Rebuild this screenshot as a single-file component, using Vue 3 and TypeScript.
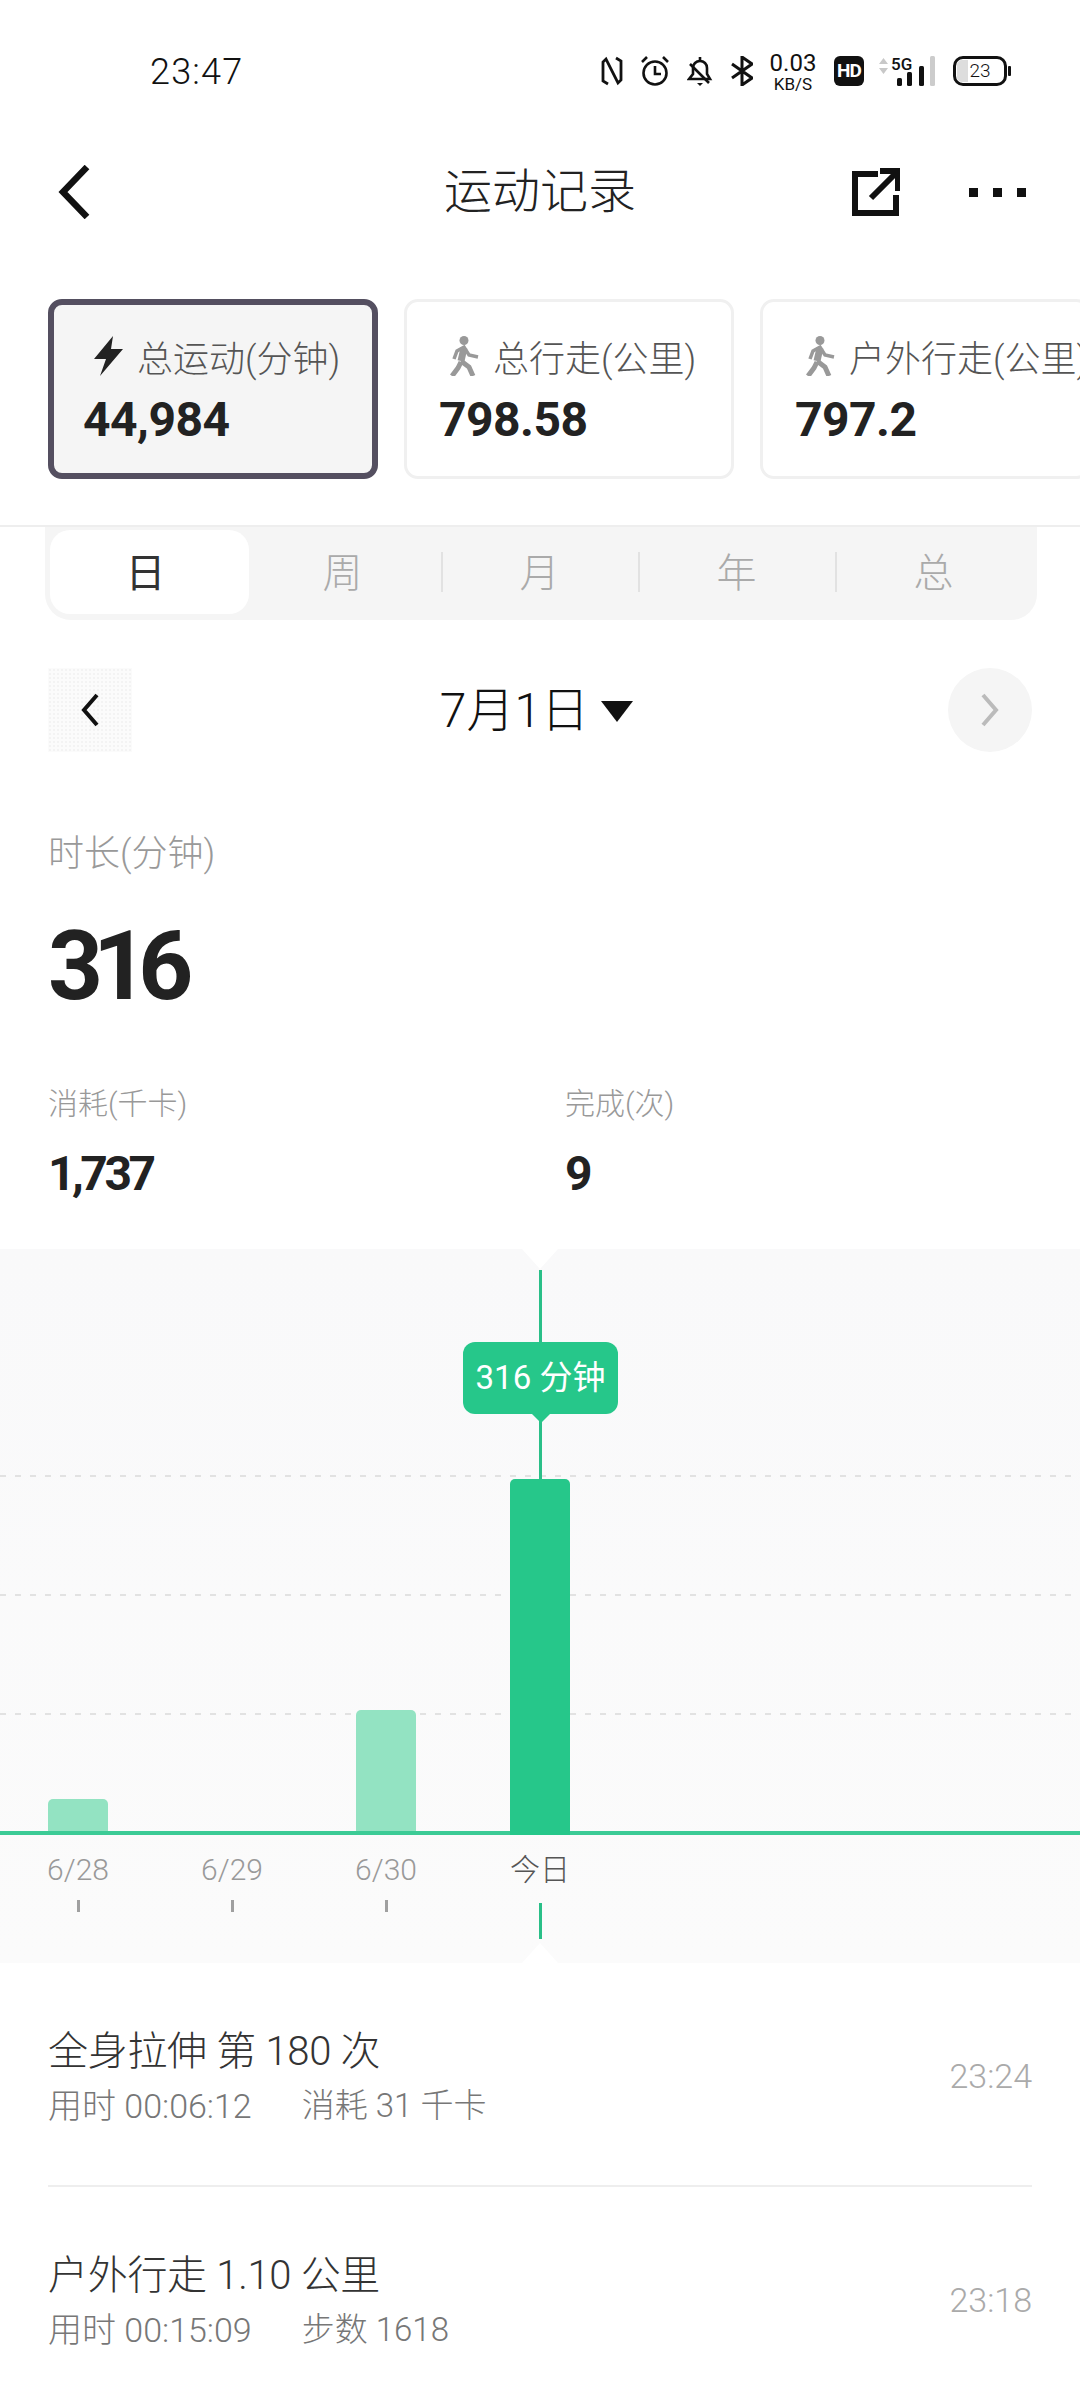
<script setup lang="ts">
interface Card {
  label: string
  value: string
  icon: 'bolt' | 'walk'
  active?: boolean
}

const cards: Card[] = [
  { label: '总运动(分钟)', value: '44,984', icon: 'bolt', active: true },
  { label: '总行走(公里)', value: '798.58', icon: 'walk' },
  { label: '户外行走(公里)', value: '797.2', icon: 'walk' },
]

const tabs = ['日', '周', '月', '年', '总']

const days = [
  { label: '6/28', height: 32, today: false },
  { label: '6/29', height: 0, today: false },
  { label: '6/30', height: 121, today: false },
  { label: '今日', height: 356, today: true },
]

const records = [
  { title: '全身拉伸 第 180 次', left: '用时 00:06:12', right: '消耗 31 千卡', time: '23:24' },
  { title: '户外行走 1.10 公里', left: '用时 00:15:09', right: '步数 1618', time: '23:18' },
]
</script>

<template>
  <div class="page">
    <!-- status bar -->
    <div class="status">
      <span class="clock">23:47</span>
      <div class="status-icons">
        <svg class="ic-nfc" viewBox="0 0 22 30" fill="none" stroke="#111" stroke-width="2.8">
          <path d="M7 28l-5-3V6l3-3 12 24 3-3V5l-5-3" />
        </svg>
        <svg class="ic-alarm" viewBox="0 0 28 30" fill="none" stroke="#111" stroke-width="2.6">
          <circle cx="14" cy="17" r="11.5" />
          <path d="M14 10v8h6M1 6l5-5M27 6l-5-5" />
        </svg>
        <svg class="ic-bell" viewBox="0 0 26 30" fill="none" stroke="#111" stroke-width="2.6">
          <path d="M2 23h21l-3-5v-6c0-4-3-7-7-7s-7 3-7 7v6z" />
          <path d="M3 8l19 19M13 1v4" />
          <path d="M10 27h6l-3 3z" fill="#111" stroke="none" />
        </svg>
        <svg class="ic-bt" viewBox="0 0 22 30" fill="none" stroke="#111" stroke-width="3">
          <path d="M1 8l20 14-10 7V1l10 7L1 22" />
        </svg>
        <div class="speed">
          <span class="speed-num">0.03</span>
          <span class="speed-unit">KB/S</span>
        </div>
        <span class="hd">HD</span>
        <div class="signal">
          <svg class="ic-updown" viewBox="0 0 9 16" fill="#c8c8c8">
            <path d="M4.5 0L9 6H0zM4.5 16L0 10h9z" />
          </svg>
          <span class="five-g">5G</span>
          <svg class="ic-bars" viewBox="0 0 38 30">
            <rect x="0" y="22" width="5" height="8" rx="1.5" fill="#111" />
            <rect x="10" y="16" width="5" height="14" rx="1.5" fill="#111" />
            <rect x="22" y="10" width="5" height="20" rx="1.5" fill="#111" />
            <rect x="33" y="0" width="5" height="30" rx="1.5" fill="#ccc" />
          </svg>
        </div>
        <div class="battery">
          <span class="battery-fill"></span>
          <span class="battery-num">23</span>
        </div>
      </div>
    </div>

    <!-- title bar -->
    <div class="nav">
      <svg class="nav-back" viewBox="0 0 32 54" fill="none" stroke="#111" stroke-width="6.5">
        <path d="M29 2L5 27l24 25" />
      </svg>
      <span class="nav-title">运动记录</span>
      <div class="nav-actions">
        <svg class="nav-share" viewBox="0 0 48 48" fill="none" stroke="#111" stroke-width="6">
          <path d="M26 6H3v39h41V27" />
          <path d="M19 30L44 5M28 3h18v20" />
        </svg>
        <div class="nav-more">
          <span></span><span></span><span></span>
        </div>
      </div>
    </div>

    <!-- summary cards -->
    <div class="cards">
      <div v-for="card in cards" :key="card.label" class="card" :class="{ active: card.active }">
        <div class="card-label">
          <svg v-if="card.icon === 'bolt'" class="card-icon" viewBox="0 0 31 40">
            <path d="M20 0L1 23h12L7 40l23-27H18z" fill="#222" />
          </svg>
          <svg v-else class="card-icon" viewBox="0 0 31 40" fill="none" stroke="#999">
            <circle cx="15" cy="4.5" r="4.5" fill="#999" stroke="none" />
            <path d="M15 12l-3 13" stroke-width="7" />
            <path d="M5 23l3-8 7-4 5 8 9 2" stroke-width="3.5" />
            <path d="M12 25l8 6 4 9" stroke-width="5" />
            <path d="M12 26l-3 6-6 8" stroke-width="5" />
          </svg>
          <span>{{ card.label }}</span>
        </div>
        <div class="card-value">{{ card.value }}</div>
      </div>
    </div>

    <!-- period tabs -->
    <div class="tabs">
      <div v-for="(tab, i) in tabs" :key="tab" class="tab" :class="{ on: i === 0, sep: i > 1 }">
        <span>{{ tab }}</span>
      </div>
    </div>

    <!-- date picker -->
    <div class="date-row">
      <div class="date-prev">
        <svg viewBox="0 0 20 36" fill="none" stroke="#111" stroke-width="4">
          <path d="M17 3L4 18l13 15" />
        </svg>
      </div>
      <div class="date-now">
        <span>7月1日</span>
        <i class="caret"></i>
      </div>
      <div class="date-next">
        <svg viewBox="0 0 20 36" fill="none" stroke="#bbb" stroke-width="4">
          <path d="M3 3l13 15L3 33" />
        </svg>
      </div>
    </div>

    <!-- numbers -->
    <div class="stats">
      <div class="stat-label">时长(分钟)</div>
      <div class="stat-big">316</div>
      <div class="stat-pair">
        <div>
          <div class="stat-small">消耗(千卡)</div>
          <div class="stat-value">1,737</div>
        </div>
        <div>
          <div class="stat-small">完成(次)</div>
          <div class="stat-value">9</div>
        </div>
      </div>
    </div>

    <!-- chart -->
    <div class="chart">
      <i class="notch notch-top"></i>
      <i class="notch notch-bottom"></i>
      <div class="plot">
        <i class="grid-line" style="top: 226px"></i>
        <i class="grid-line" style="top: 345px"></i>
        <i class="grid-line" style="top: 464px"></i>
        <div class="bars">
          <div v-for="day in days" :key="day.label" class="bar-col">
            <div v-if="day.today" class="marker">
              <div class="tooltip">316 分钟</div>
            </div>
            <div class="bar" :class="{ today: day.today }" :style="{ height: day.height + 'px' }"></div>
          </div>
        </div>
      </div>
      <div class="axis">
        <div v-for="day in days" :key="day.label" class="axis-col" :class="{ today: day.today }">
          <span class="axis-label">{{ day.label }}</span>
          <i class="axis-tick"></i>
        </div>
      </div>
    </div>

    <!-- records -->
    <div class="records">
      <div v-for="rec in records" :key="rec.time" class="record">
        <div>
          <div class="record-title">{{ rec.title }}</div>
          <div class="record-sub">
            <span>{{ rec.left }}</span>
            <span class="record-right">{{ rec.right }}</span>
          </div>
        </div>
        <span class="record-time">{{ rec.time }}</span>
      </div>
    </div>
  </div>
</template>

<style scoped>
.page {
  width: 1080px;
  height: 2400px;
  overflow: hidden;
  background: #fff;
  font-family: Roboto, "Noto Sans CJK SC", sans-serif;
  color: #222;
}

.status {
  height: 142px;
  display: flex;
  align-items: center;
  padding-left: 150px;
  padding-right: 73px;
  justify-content: space-between;
}
.clock {
  padding-top: 2px;
  font-size: 36px;
  font-weight: 300;
  letter-spacing: 1.2px;
  color: #111;
}
.status-icons {
  display: flex;
  align-items: center;
  height: 36px;
}
.ic-nfc { width: 22px; height: 30px; }
.ic-alarm { width: 28px; height: 30px; margin-left: 18px; }
.ic-bell { width: 26px; height: 30px; margin-left: 18px; }
.ic-bt { width: 22px; height: 30px; margin-left: 18px; }
.speed {
  display: flex;
  flex-direction: column;
  align-items: center;
  width: 50px;
  margin-left: 15px;
  padding-top: 2px;
  color: #111;
  line-height: 1;
}
.speed-num { font-size: 24px; }
.speed-unit { font-size: 17px; margin-top: 1px; }
.hd {
  width: 30px;
  height: 30px;
  margin-left: 16px;
  border-radius: 6px;
  background: #111;
  color: #fff;
  font-size: 19px;
  font-weight: 700;
  letter-spacing: -1px;
  text-align: center;
  line-height: 30px;
}
.signal {
  position: relative;
  width: 56px;
  height: 30px;
  margin-left: 15px;
}
.ic-updown { position: absolute; left: 0; top: 2px; width: 9px; height: 16px; }
.five-g {
  position: absolute;
  left: 12px;
  top: -2px;
  font-size: 17px;
  font-weight: 500;
  color: #111;
}
.ic-bars { position: absolute; left: 18px; top: 0; width: 38px; height: 30px; }
.battery {
  position: relative;
  width: 54px;
  height: 30px;
  margin-left: 18px;
  box-sizing: border-box;
  border: 3px solid #111;
  border-radius: 10px;
  text-align: center;
}
.battery::after {
  content: "";
  position: absolute;
  right: -7px;
  top: 7px;
  width: 3px;
  height: 10px;
  background: #111;
  border-radius: 1px;
}
.battery-fill {
  position: absolute;
  left: 1px;
  top: 1px;
  bottom: 1px;
  width: 11px;
  background: #ddd;
  border-radius: 5px 0 0 5px;
}
.battery-num {
  position: relative;
  font-size: 19px;
  font-weight: 300;
  line-height: 24px;
  display: block;
  color: #111;
}

.nav {
  height: 100px;
  display: grid;
  grid-template-columns: 1fr auto 1fr;
  align-items: center;
  padding: 0 54px 0 58px;
}
.nav-back { width: 32px; height: 54px; }
.nav-title {
  padding-right: 4px;
  font-size: 48px;
  font-weight: 300;
  line-height: 60px;
  color: #222;
}
.nav-actions {
  display: flex;
  align-items: center;
  justify-content: flex-end;
  gap: 69px;
}
.nav-share { width: 48px; height: 48px; }
.nav-more { display: flex; gap: 15px; }
.nav-more span { width: 9px; height: 9px; background: #111; }

.cards {
  display: flex;
  gap: 26px;
  padding: 57px 0 46px 48px;
  overflow: hidden;
  border-bottom: 2px solid #eee;
}
.card {
  flex: none;
  box-sizing: border-box;
  width: 330px;
  height: 180px;
  padding: 29px 0 0 32px;
  border: 3px solid #f0f0f0;
  border-radius: 14px;
}
.card.active {
  padding: 26px 0 0 29px;
  border: 6px solid #544f60;
  background: #f5f5f5;
}
.card-label {
  display: flex;
  align-items: center;
  gap: 13px;
  height: 50px;
  padding-left: 10px;
  font-size: 36px;
  font-weight: 300;
  color: #555;
  white-space: nowrap;
}
.card-icon { width: 31px; height: 40px; flex: none; }
.card-value {
  margin-top: 12px;
  font-size: 48px;
  font-weight: 700;
  line-height: 54px;
  letter-spacing: -0.5px;
  color: #222;
}

.tabs {
  display: flex;
  box-sizing: border-box;
  width: 992px;
  height: 93px;
  margin-left: 45px;
  padding: 3px 0 6px 2px;
  background: #f5f5f5;
  border-radius: 0 0 26px 26px;
}
.tab {
  position: relative;
  width: 197px;
  text-align: center;
  font-size: 40px;
  font-weight: 300;
  line-height: 87px;
  color: #aaa;
}
.tab span { position: relative; }
.tab.on { color: #333; font-weight: 400; }
.tab.on::before {
  content: "";
  position: absolute;
  left: 3px;
  right: -5px;
  top: 0;
  bottom: 0;
  background: #fff;
  border-radius: 20px;
}
.tab.sep::before {
  content: "";
  position: absolute;
  left: 0;
  top: 22px;
  width: 2px;
  height: 40px;
  background: #e2e2e2;
}

.date-row {
  display: flex;
  align-items: center;
  justify-content: space-between;
  height: 84px;
  margin-top: 48px;
  padding: 0 48px;
}
.date-prev {
  width: 84px;
  height: 84px;
  display: flex;
  align-items: center;
  justify-content: center;
  background-color: #fbfbfb;
  background-image: radial-gradient(#f3f3f3 1px, transparent 1.5px);
  background-size: 4px 4px;
}
.date-prev svg, .date-next svg { width: 20px; height: 36px; }
.date-now {
  display: flex;
  align-items: center;
  gap: 12px;
  margin-right: 7px;
  padding-top: 2px;
  font-size: 48px;
  font-weight: 300;
  line-height: 60px;
  color: #111;
}
.caret {
  width: 0;
  height: 0;
  border-left: 16px solid transparent;
  border-right: 16px solid transparent;
  border-top: 21px solid #111;
}
.date-next {
  width: 84px;
  height: 84px;
  display: flex;
  align-items: center;
  justify-content: center;
  background: #f5f5f5;
  border-radius: 50%;
}

.stats { padding: 77px 48px 0; }
.stat-label {
  font-size: 36px;
  font-weight: 300;
  line-height: 50px;
  color: #999;
}
.stat-big {
  margin-top: 27px;
  font-size: 96px;
  font-weight: 700;
  line-height: 120px;
  letter-spacing: -10px;
  color: #222;
}
.stat-pair {
  display: grid;
  grid-template-columns: 517px 1fr;
  margin-top: 58px;
}
.stat-small {
  font-size: 30px;
  font-weight: 300;
  line-height: 40px;
  color: #999;
}
.stat-value {
  margin-top: 20px;
  font-size: 48px;
  font-weight: 700;
  line-height: 60px;
  letter-spacing: -3.5px;
  color: #222;
}

.chart {
  position: relative;
  height: 714px;
  margin-top: 45px;
  background: linear-gradient(#f9f9fa, #fbfbfb);
}
.notch {
  position: absolute;
  left: 522px;
  width: 36px;
  height: 20px;
  background: #fff;
}
.notch-top { top: 0; clip-path: polygon(0 0, 100% 0, 50% 100%); }
.notch-bottom { bottom: 0; clip-path: polygon(50% 0, 100% 100%, 0 100%); }

.plot {
  position: relative;
  height: 586px;
}
.grid-line {
  position: absolute;
  left: 0;
  right: 0;
  height: 2px;
  background: repeating-linear-gradient(90deg, #e2e2e2 0 6px, transparent 6px 15px);
}
.bars {
  position: absolute;
  left: 0;
  right: 0;
  bottom: 0;
  display: flex;
  align-items: flex-end;
  gap: 94px;
  padding-left: 48px;
  border-bottom: 4px solid #3ccb96;
}
.bar-col {
  position: relative;
  width: 60px;
}
.bar {
  background: #93e3c2;
  border-radius: 5px 5px 0 0;
}
.bar.today {
  background: #26c78a;
  margin-bottom: -4px;
  position: relative;
}
.marker {
  position: absolute;
  left: 29px;
  bottom: 349px;
  width: 3px;
  height: 212px;
  background: #2abf88;
}
.tooltip {
  position: absolute;
  left: -76px;
  top: 72px;
  width: 155px;
  height: 72px;
  border-radius: 12px;
  background: #26c78a;
  color: #fff;
  font-size: 33px;
  line-height: 72px;
  text-align: center;
  white-space: nowrap;
}
.tooltip::after {
  content: "";
  position: absolute;
  left: 69px;
  top: 72px;
  border-left: 9px solid transparent;
  border-right: 9px solid transparent;
  border-top: 9px solid #26c78a;
}

.axis {
  display: flex;
  gap: 94px;
  padding-left: 48px;
}
.axis-col {
  position: relative;
  width: 60px;
  height: 128px;
  text-align: center;
}
.axis-label {
  display: block;
  margin: 15px -20px 0;
  font-size: 30px;
  font-weight: 300;
  line-height: 40px;
  color: #999;
}
.axis-col.today .axis-label { color: #555; }
.axis-tick {
  position: absolute;
  left: 29px;
  top: 65px;
  width: 3px;
  height: 12px;
  background: #a0a0a0;
}
.axis-col.today .axis-tick {
  top: 68px;
  height: 36px;
  background: #2abf88;
}

.records { padding: 0 48px; }
.record {
  display: flex;
  align-items: center;
  justify-content: space-between;
  padding: 61px 0 57px;
  border-bottom: 2px solid #eee;
}
.record-title {
  font-size: 40px;
  font-weight: 300;
  line-height: 56px;
  letter-spacing: -0.3px;
  color: #333;
}
.record-sub {
  display: flex;
  gap: 50px;
  margin-top: 4px;
  font-size: 34px;
  font-weight: 300;
  line-height: 44px;
  color: #777;
}
.record-right { font-size: 33px; }
.record-time {
  font-size: 34px;
  font-weight: 300;
  color: #aaa;
}
</style>

<style>
html, body {
  margin: 0;
  background: #fff;
}
</style>
